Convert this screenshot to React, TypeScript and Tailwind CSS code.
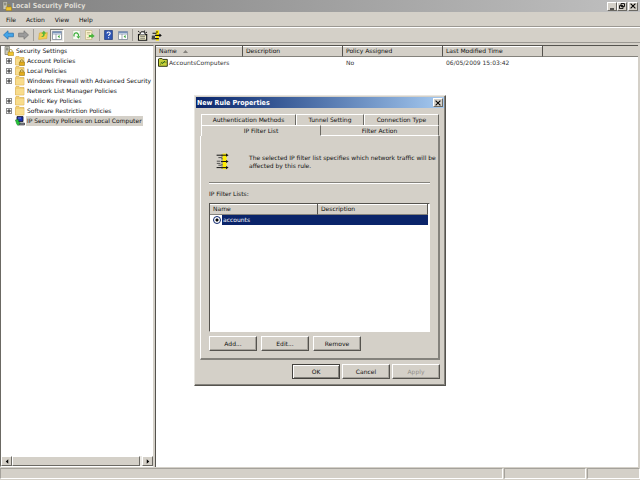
import React, { useState } from 'react';
import { clsx } from 'clsx';

const RAISED = 'border border-t-white border-l-white border-b-[#6b6963] border-r-[#6b6963] bg-[#d4d0c8]';

/* ---------- icons ---------- */

type IconProps = { className?: string };

const ServerIcon = ({ className }: IconProps) => (
    <svg viewBox="0 0 10 10" className={className} aria-hidden="true">
        <path d="M1 .5h4.5v8H1z" fill="#c9c9bd" stroke="#77776c" strokeWidth=".7" />
        <path d="M2 2.2h2.5M2 3.8h2.5" stroke="#55554c" strokeWidth=".7" />
        <path d="M5.2 6V4.8c0-1.8 3-1.8 3 0V6" fill="none" stroke="#a08a30" strokeWidth=".8" />
        <path d="M4 6h5.5v3.6H4z" fill="#efc52f" stroke="#a07a10" strokeWidth=".5" />
    </svg>
);

const FolderIcon = ({ className, locked }: IconProps & { locked?: boolean }) => (
    <svg viewBox="0 0 10 10" className={className} aria-hidden="true">
        <path d="M.5 1.5l.5-1h3l1 1h4v7.5H.5z" fill="#f2cf6e" stroke="#d6a947" strokeWidth=".6" />
        <path d="M1 3h7.8v5.6H1z" fill="#f8dc8c" />
        {locked && (
            <>
                <path d="M5.4 6V5c0-1.7 2.8-1.7 2.8 0v1" fill="none" stroke="#8a7420" strokeWidth=".8" />
                <path d="M4.4 6h5.1v3.5H4.4z" fill="#e3ad1d" stroke="#94700f" strokeWidth=".5" />
            </>
        )}
    </svg>
);

const ComputerIcon = ({ className }: IconProps) => (
    <svg viewBox="0 0 10 10" className={className} aria-hidden="true">
        <path d="M2 .6h6v5H2z" fill="#1b2fb0" stroke="#1c1c33" strokeWidth=".9" />
        <path d="M3 2h3" stroke="#7fa4ff" strokeWidth=".7" />
        <path d="M4 7h5.5v2H4z" fill="#8b8b9b" stroke="#222" strokeWidth=".6" />
        <path d="M.3 4l3.2-.6v2.2l2 1.6-1.6.7-.6 1.8-1.5-1.4z" fill="#27c43b" stroke="#0e6a1c" strokeWidth=".4" />
    </svg>
);

const PolicyFolderIcon = ({ className }: IconProps) => (
    <svg viewBox="0 0 10 9" className={className} aria-hidden="true">
        <path d="M.5 8.3V1l1-.6h2.4l.8 1h4.6v6.9z" fill="#c8d23a" stroke="#222608" strokeWidth=".9" />
        <path d="M2 7.2l1.6-3h5" fill="none" stroke="#5a6410" strokeWidth=".6" />
        <path d="M3.2 4.4l1.2 1.3 2.6-2.6" fill="none" stroke="#12601a" strokeWidth=".9" />
    </svg>
);

const ArrowIcon = ({ className, fill, stroke, flip }: IconProps & { fill: string; stroke: string; flip?: boolean }) => (
    <svg viewBox="0 0 11 10" className={className} aria-hidden="true">
        <path
            d={flip ? 'M10.5 5L6 .8v2.4H.6v3.6H6v2.4z' : 'M.5 5L5 .8v2.4h5.4v3.6H5v2.4z'}
            fill={fill}
            stroke={stroke}
            strokeWidth=".8"
        />
    </svg>
);

const UpFolderIcon = ({ className }: IconProps) => (
    <svg viewBox="0 0 10 10" className={className} aria-hidden="true">
        <path d="M.6 9.4L1.4 3l2.8-.6.8.8 4.4-.6-.6 6z" fill="#f3cf4e" stroke="#cf9f35" strokeWidth=".5" />
        <path d="M2.6 7c2.2-.4 2.6-1.6 2.4-3.2H3.4L5.8.8l2.6 2.6H6.8C7 6 5.4 7.4 2.6 7z" fill="#58b53a" />
    </svg>
);

const PaneIcon = ({ className }: IconProps) => (
    <svg viewBox="0 0 10 9" className={className} aria-hidden="true">
        <path d="M.5.5h9v8h-9z" fill="#fff" stroke="#7c8796" strokeWidth=".8" />
        <path d="M.5.5h9v2h-9z" fill="#7892b8" />
        <path d="M1 3.5h8" stroke="#9aa7ba" strokeWidth=".5" />
        <path d="M4 3v5.5" stroke="#7c8796" strokeWidth=".7" />
        <path d="M7.6 4v3.2L5.6 5.6z" fill="#3aa33a" />
    </svg>
);

const RefreshIcon = ({ className }: IconProps) => (
    <svg viewBox="0 0 9 10" className={className} aria-hidden="true">
        <path d="M.8.4h7.4v9.2H.8z" fill="#f7faf2" stroke="#b4bba8" strokeWidth=".6" />
        <path d="M2.3 6.5A2.3 2.3 0 1 1 6.4 6" fill="none" stroke="#3aae3a" strokeWidth="1.2" />
        <path d="M4.4 6.2h3.9L6.4 8.8z" fill="#3aae3a" />
    </svg>
);

const ExportIcon = ({ className }: IconProps) => (
    <svg viewBox="0 0 10 10" className={className} aria-hidden="true">
        <path d="M.5.5h6.5v9H.5z" fill="#fbf4cf" stroke="#b8ad7a" strokeWidth=".6" />
        <path d="M1.8 2.5h3.8M1.8 4h3M1.8 7.6h3" stroke="#a8a070" strokeWidth=".6" />
        <path d="M3.8 4.9h2.6V3.2L9.7 6 6.4 8.6V7H3.8z" fill="#49b53c" />
    </svg>
);

const HelpIcon = ({ className }: IconProps) => (
    <svg viewBox="0 0 9 10" className={className} aria-hidden="true">
        <path d="M.6.4h7.8v9.2H.6z" fill="#2f55b4" stroke="#1b3576" strokeWidth=".7" />
        <path d="M3 3.6c0-2.2 3.2-2.1 3.2-.2 0 1.2-1.6 1.3-1.6 2.7M4.6 7.2v1.1" fill="none" stroke="#fff" strokeWidth="1.1" />
    </svg>
);

const CreatePolicyIcon = ({ className }: IconProps) => (
    <svg viewBox="0 0 11 11" className={className} aria-hidden="true">
        <path d="M1.5 4.6h8.2v5.6H1.5z" fill="#f3efc9" stroke="#111" strokeWidth="1.1" />
        <path d="M3.2 6.6h4.8M3.2 8.3h4.8" stroke="#555" strokeWidth=".7" />
        <path d="M2.6 4.5l1.6-2.7h2.6l1.8 2.7" fill="#fff" stroke="#111" strokeWidth="1" />
        <path d="M1 1l1.6 1.3M7.6.5L7.2 2M10 2.2l-1.6.6" stroke="#111" strokeWidth=".9" />
    </svg>
);

const FilterIcon = ({ className }: IconProps) => (
    <svg viewBox="0 0 13 17" className={className} aria-hidden="true">
        <path d="M6.5.6h4v15.6h-4z" fill="#ffee00" />
        <path d="M.6 2.2h10M5 8.5h6M.6 14.6h10" stroke="#111" strokeWidth="1" />
        <path d="M10 .6l2.6 1.6L10 3.8zM10 6.9l2.6 1.6-2.6 1.6zM10 13l2.6 1.6-2.6 1.6z" fill="#111" />
        <path d="M2.4 4.6h3.4M.8 8.2h3.6M.8 10.4h3.6M2.4 12.2h3" stroke="#444" strokeWidth=".9" />
        <path d="M6 1.6v14" stroke="#222" strokeWidth=".9" strokeDasharray="2 1" />
    </svg>
);

const FilterToolIcon = ({ className }: IconProps) => (
    <svg viewBox="0 0 11 11" className={className} aria-hidden="true">
        <path d="M4.8.4H8v10.2H4.8z" fill="#ffe600" />
        <path d="M1.5 3.2h4M4 5.4h6M.8 8.6h7" stroke="#111" strokeWidth="1.1" />
        <path d="M8.4 3.6l2.4 1.8-2.4 1.8z" fill="#111" />
        <path d="M.8 5.6h3.2v3.6H.8z" fill="#444" />
        <path d="M6 1v2" stroke="#111" strokeWidth=".9" />
    </svg>
);

const CloseGlyph = ({ className }: IconProps) => (
    <svg viewBox="0 0 6 6" className={className} aria-hidden="true">
        <path d="M.6.6l4.8 4.8M5.4.6L.6 5.4" stroke="#000" strokeWidth="1.1" />
    </svg>
);

/* ---------- data ---------- */

const treeItems = [
    { label: 'Account Policies', expandable: true, icon: <FolderIcon locked className="size-[10px]" /> },
    { label: 'Local Policies', expandable: true, icon: <FolderIcon locked className="size-[10px]" /> },
    { label: 'Windows Firewall with Advanced Security', expandable: true, icon: <FolderIcon className="size-[10px]" /> },
    { label: 'Network List Manager Policies', expandable: false, icon: <FolderIcon className="size-[10px]" /> },
    { label: 'Public Key Policies', expandable: true, icon: <FolderIcon className="size-[10px]" /> },
    { label: 'Software Restriction Policies', expandable: true, icon: <FolderIcon className="size-[10px]" /> },
    { label: 'IP Security Policies on Local Computer', expandable: false, icon: <ComputerIcon className="size-[10px]" /> },
];

/* ---------- main window ---------- */

const TitleBar = () => (
    <header className="flex h-3 shrink-0 items-center bg-linear-to-r from-[#808080] to-[#c0c0c0] pl-0.5 pr-0.5">
        <ServerIcon className="size-[10px]" />
        <h1 className="flex-1 text-[7px] font-bold text-[#dedbd4] font-['DejaVu_Sans_Condensed','DejaVu_Sans',sans-serif]">Local Security Policy</h1>
        <button aria-label="Minimize" className={clsx(RAISED, 'flex h-[9px] w-[10px] items-end justify-center')}>
            <svg viewBox="0 0 6 6" className="size-[6px]"><path d="M1 5h4" stroke="#000" strokeWidth="1.2" /></svg>
        </button>
        <button aria-label="Restore" className={clsx(RAISED, 'flex h-[9px] w-[10px] items-center justify-center')}>
            <svg viewBox="0 0 6 6" className="size-[6px]">
                <path d="M2 .6h3.5v3H2zM.5 2.6H4v3H.5z" fill="#d4d0c8" stroke="#000" strokeWidth=".9" />
            </svg>
        </button>
        <button aria-label="Close" className={clsx(RAISED, 'ml-px flex h-[9px] w-[10px] items-center justify-center')}>
            <CloseGlyph className="size-[6px]" />
        </button>
    </header>
);

const MenuBar = () => (
    <nav className="flex h-[15px] shrink-0 items-center gap-[10px] border-b border-[#9b9892] pt-px pl-[6px]">
        {['File', 'Action', 'View', 'Help'].map(item => (
            <button key={item}>{item}</button>
        ))}
    </nav>
);

const Separator = () => <span className="mx-[4px] h-3 w-px bg-[#a19e97]" />;

const Toolbar = () => (
    <div role="toolbar" className="flex h-4 shrink-0 items-center border-t border-b border-t-white border-b-[#9b9892] pl-[3px]">
        <button aria-label="Back"><ArrowIcon className="h-[10px] w-[11px]" fill="#43a5e8" stroke="#2674b5" /></button>
        <button aria-label="Forward" className="ml-[4px]"><ArrowIcon flip className="h-[10px] w-[11px]" fill="#9b9b9b" stroke="#787878" /></button>
        <Separator />
        <button aria-label="Up one level"><UpFolderIcon className="size-[10px]" /></button>
        <button aria-label="Show console tree" className="ml-[2px] flex h-[13px] w-[14px] items-center justify-center border border-t-[#84827c] border-l-[#84827c] border-b-white border-r-white bg-[#ebe9e4]">
            <PaneIcon className="h-[9px] w-[10px]" />
        </button>
        <button aria-label="Refresh" className="ml-[8px]"><RefreshIcon className="h-[10px] w-[9px]" /></button>
        <button aria-label="Export list" className="ml-[4px]"><ExportIcon className="size-[10px]" /></button>
        <Separator />
        <button aria-label="Help"><HelpIcon className="h-[10px] w-[9px]" /></button>
        <button aria-label="Show action pane" className="ml-[5px]"><PaneIcon className="h-[9px] w-[10px]" /></button>
        <Separator />
        <button aria-label="Create policy"><CreatePolicyIcon className="size-[11px]" /></button>
        <button aria-label="Manage filter lists" className="ml-[3px]"><FilterToolIcon className="size-[11px]" /></button>
    </div>
);

const Tree = () => {
    const [selected, setSelected] = useState('IP Security Policies on Local Computer');

    return (
        <aside className="flex w-[154px] shrink-0 flex-col border border-t-[#6b6963] border-l-[#6b6963] border-b-white border-r-[#d4d0c8] bg-white">
            <div className="flex-1 overflow-hidden">
                <div className="flex h-[10px] items-center gap-[2px] pl-[3px]">
                    <ServerIcon className="size-[10px] shrink-0" />
                    <span>Security Settings</span>
                </div>
                <ul>
                    {treeItems.map(item => (
                        <li key={item.label} className="flex h-[10px] items-center pl-[5px]">
                            {item.expandable ? (
                                <button aria-label={`Expand ${item.label}`} className="flex size-[6px] shrink-0 items-center justify-center border border-[#8c8c8c]">
                                    <svg viewBox="0 0 4 4" className="size-[4px] shrink-0"><path d="M0 2h4M2 0v4" stroke="#000" strokeWidth=".8" /></svg>
                                </button>
                            ) : (
                                <span className="w-[6px] shrink-0" />
                            )}
                            <span className="ml-[3px] shrink-0">{item.icon}</span>
                            <button
                                onClick={() => setSelected(item.label)}
                                className={clsx('ml-px h-[10px] px-px whitespace-nowrap', selected === item.label && 'bg-[#d4d0c8]')}
                            >
                                {item.label}
                            </button>
                        </li>
                    ))}
                </ul>
            </div>
            <div className="flex h-[10px] shrink-0 bg-[#eceae6]">
                <button aria-label="Scroll left" className={clsx(RAISED, 'flex w-[11px] items-center justify-center')}>
                    <svg viewBox="0 0 4 6" className="h-[5px] w-[4px]"><path d="M3.5.3v5.4L.5 3z" /></svg>
                </button>
                <div className={clsx(RAISED, 'w-[128px]')} />
                <span className="flex-1" />
                <button aria-label="Scroll right" className={clsx(RAISED, 'flex w-[11px] items-center justify-center')}>
                    <svg viewBox="0 0 4 6" className="h-[5px] w-[4px]"><path d="M.5.3v5.4L3.5 3z" /></svg>
                </button>
            </div>
        </aside>
    );
};

const HEAD_CELL = 'border-r border-r-[#55534e] border-b border-b-[#84827c] bg-[#d4d0c8] pl-[3px] font-normal shadow-[inset_0_1px_0_#fff]';

const PolicyTable = () => (
    <main className="min-w-0 flex-1 border-t border-l border-[#55534e] bg-white">
        <table className="w-full table-fixed border-separate border-spacing-0 text-left">
            <thead>
                <tr className="h-[10px]">
                    <th className={clsx(HEAD_CELL, 'w-[87px]')}>
                        <span className="flex items-center gap-[6px]">
                            Name
                            <svg viewBox="0 0 5 3" className="h-[3px] w-[5px]"><path d="M2.5 0L5 3H0z" fill="#84827c" /></svg>
                        </span>
                    </th>
                    <th className={clsx(HEAD_CELL, 'w-[100px]')}>Description</th>
                    <th className={clsx(HEAD_CELL, 'w-[100px]')}>Policy Assigned</th>
                    <th className={clsx(HEAD_CELL, 'w-[100px]')}>Last Modified Time</th>
                    <th className="border-b border-b-[#84827c] bg-[#d4d0c8]" aria-label="Empty" />
                </tr>
            </thead>
            <tbody>
                <tr className="h-[11px] text-[#333]">
                    <td className="pl-[2px]">
                        <span className="flex items-center gap-px">
                            <PolicyFolderIcon className="h-[9px] w-[10px]" />
                            AccountsComputers
                        </span>
                    </td>
                    <td />
                    <td className="pl-[3px]">No</td>
                    <td className="pl-[3px]">06/05/2009 15:03:42</td>
                    <td />
                </tr>
            </tbody>
        </table>
    </main>
);

const StatusBar = () => (
    <footer className="flex h-[13px] shrink-0 gap-px pt-px pb-px">
        <div className="flex-1 border border-t-[#a5a29b] border-l-[#a5a29b] border-b-white border-r-white" />
        <div className="w-[82px] border border-t-[#a5a29b] border-l-[#a5a29b] border-b-white border-r-white" />
        <div className="w-[53px] border border-t-[#a5a29b] border-l-[#a5a29b] border-b-white border-r-white" />
    </footer>
);

/* ---------- dialog ---------- */

const TAB = 'h-[11px] border-t border-l border-t-white border-l-white border-r border-r-[#6b6963] text-center';

const DialogButton = ({ children, primary, disabled }: { children: React.ReactNode; primary?: boolean; disabled?: boolean }) => (
    <button
        disabled={disabled}
        className={clsx(
            'h-[15px] w-[48px] border bg-[#d4d0c8]',
            primary
                ? 'border-[#44423e] shadow-[inset_1px_1px_0_#fff,inset_-1px_-1px_0_#84827c]'
                : 'border-t-white border-l-white border-b-[#55534e] border-r-[#55534e] shadow-[inset_-1px_-1px_0_#a5a29b]',
            disabled && 'text-[#928f88]'
        )}
    >
        {children}
    </button>
);

const RuleDialog = () => {
    const [tab, setTab] = useState('IP Filter List');

    const renderTab = (name: string, width: string) => (
        <button role="tab" aria-selected={tab === name} onClick={() => setTab(name)} className={clsx(TAB, width)}>
            {name}
        </button>
    );

    return (
        <section
            role="dialog"
            aria-labelledby="rule-title"
            className="absolute top-[95px] left-[194px] w-[252px] border border-t-[#e8e6e1] border-l-[#e8e6e1] border-b-[#55534e] border-r-[#55534e] bg-[#d4d0c8] p-px shadow-[inset_-1px_-1px_0_#84827c]"
        >
            <div className="flex h-[11px] items-center bg-linear-to-r from-[#0a246a] to-[#a6caf0] pr-px pl-px">
                <h2 id="rule-title" className="flex-1 text-[7px] font-bold text-white font-['DejaVu_Sans_Condensed','DejaVu_Sans',sans-serif]">New Rule Properties</h2>
                <button aria-label="Close" className={clsx(RAISED, 'flex h-[9px] w-[10px] items-center justify-center')}>
                    <CloseGlyph className="size-[6px]" />
                </button>
            </div>

            <div className="px-[4px] pt-[6px] pb-[5px]">
                <div role="tablist" className="px-px">
                    <div className="flex">
                        {renderTab('Authentication Methods', 'w-[95px]')}
                        {renderTab('Tunnel Setting', 'w-[68px]')}
                        {renderTab('Connection Type', 'flex-1')}
                    </div>
                    <div className="flex">
                        <button role="tab" aria-selected={tab === 'IP Filter List'} onClick={() => setTab('IP Filter List')} className="h-[11px] w-[119px] border-t border-l border-white text-center">
                            IP Filter List
                        </button>
                        <button role="tab" aria-selected={tab === 'Filter Action'} onClick={() => setTab('Filter Action')} className="h-[11px] flex-1 border-t border-r border-b border-l border-t-white border-r-[#6b6963] border-b-white border-l-[#6b6963] text-center">
                            Filter Action
                        </button>
                    </div>
                </div>

                <div role="tabpanel" className="border-r-2 border-b-2 border-l border-l-white border-r-[#84827c] border-b-[#84827c] pb-[7px]">
                    <div className="flex items-center gap-[20px] pt-[17px] pb-[12px] pl-[15px]">
                        <FilterIcon className="h-[17px] w-[13px] shrink-0" />
                        <p className="leading-[8px]">
                            The selected IP filter list specifies which network traffic will be affected by this rule.
                        </p>
                    </div>
                    <div className="px-[8px]">
                        <hr className="border-t border-b border-t-[#84827c] border-b-white" />
                        <p id="filter-lists" className="pt-[5px] pb-[4px]">IP Filter Lists:</p>
                        <div className="h-[129px] border border-t-[#55534e] border-l-[#55534e] border-b-white border-r-white bg-white pr-px">
                            <table aria-labelledby="filter-lists" className="w-full table-fixed border-separate border-spacing-0 text-left">
                                <thead>
                                    <tr className="h-[10px]">
                                        <th className={clsx(HEAD_CELL, 'w-[108px]')}>Name</th>
                                        <th className={HEAD_CELL}>Description</th>
                                    </tr>
                                </thead>
                                <tbody>
                                    <tr className="h-[10px] text-white">
                                        <td colSpan={2}>
                                            <label className="flex h-[10px] items-center">
                                                <input
                                                    type="radio"
                                                    name="filter-list"
                                                    defaultChecked
                                                    className="mr-px ml-[3px] size-[8px] shrink-0 appearance-none rounded-full border border-[#0a246a] bg-white checked:bg-[radial-gradient(#000_1px,#fff_2px)]"
                                                />
                                                <span className="h-[10px] flex-1 bg-[#0a246a] pl-px">accounts</span>
                                            </label>
                                        </td>
                                    </tr>
                                </tbody>
                            </table>
                        </div>
                        <div className="flex gap-[4px] pt-[4px]">
                            <DialogButton>Add...</DialogButton>
                            <DialogButton>Edit...</DialogButton>
                            <DialogButton>Remove</DialogButton>
                        </div>
                    </div>
                </div>

                <div className="flex justify-end gap-[2px] pt-[4px]">
                    <DialogButton primary>OK</DialogButton>
                    <DialogButton>Cancel</DialogButton>
                    <DialogButton disabled>Apply</DialogButton>
                </div>
            </div>
        </section>
    );
};

const App: React.FC = () => (
    <div className="relative flex h-screen flex-col overflow-hidden bg-[#d4d0c8] font-['DejaVu_Sans',sans-serif] text-[6px] leading-[10px] text-[#111]">
        <TitleBar />
        <MenuBar />
        <Toolbar />
        <div className="flex min-h-0 flex-1 gap-px pt-[2px] pr-[2px]">
            <Tree />
            <PolicyTable />
        </div>
        <StatusBar />
        <RuleDialog />
    </div>
);

export default App;
